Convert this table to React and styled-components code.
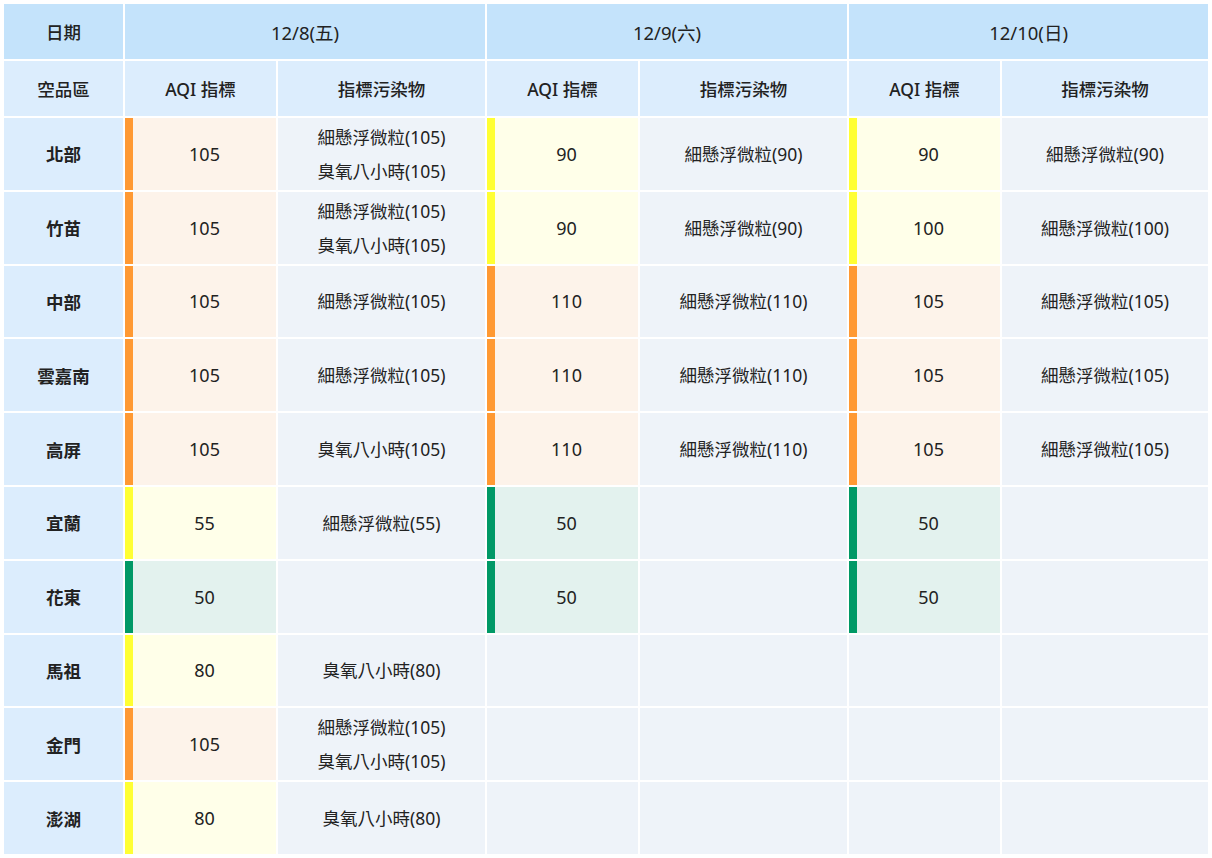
import React from 'react';
import styled, {createGlobalStyle} from "styled-components";

const GlobalStyle = createGlobalStyle`
    body {
        margin: 0;
        background: #ffffff;
        font-family: "Noto Sans", "Noto Sans CJK TC", sans-serif;
        color: #222222;
    }
`;

const dates = ['12/8(五)', '12/9(六)', '12/10(日)'];
const colWidths = [119, 151, 207, 151, 207, 151, 206];

const PM = (v) => `細懸浮微粒(${v})`;
const O3 = (v) => `臭氧八小時(${v})`;

const rows = [
    {area: '北部', days: [{aqi: 105, items: [PM(105), O3(105)]}, {aqi: 90, items: [PM(90)]}, {aqi: 90, items: [PM(90)]}]},
    {area: '竹苗', days: [{aqi: 105, items: [PM(105), O3(105)]}, {aqi: 90, items: [PM(90)]}, {aqi: 100, items: [PM(100)]}]},
    {area: '中部', days: [{aqi: 105, items: [PM(105)]}, {aqi: 110, items: [PM(110)]}, {aqi: 105, items: [PM(105)]}]},
    {area: '雲嘉南', days: [{aqi: 105, items: [PM(105)]}, {aqi: 110, items: [PM(110)]}, {aqi: 105, items: [PM(105)]}]},
    {area: '高屏', days: [{aqi: 105, items: [O3(105)]}, {aqi: 110, items: [PM(110)]}, {aqi: 105, items: [PM(105)]}]},
    {area: '宜蘭', days: [{aqi: 55, items: [PM(55)]}, {aqi: 50, items: []}, {aqi: 50, items: []}]},
    {area: '花東', days: [{aqi: 50, items: []}, {aqi: 50, items: []}, {aqi: 50, items: []}]},
    {area: '馬祖', days: [{aqi: 80, items: [O3(80)]}, null, null]},
    {area: '金門', days: [{aqi: 105, items: [PM(105), O3(105)]}, null, null]},
    {area: '澎湖', days: [{aqi: 80, items: [O3(80)]}, null, null]},
];

const levelOf = (aqi) => {
    if (aqi == null) return 'none';
    if (aqi <= 50) return 'good';
    if (aqi <= 100) return 'fair';
    return 'bad';
};

const levels = {
    none: {bar: 'transparent', bg: '#eef3f9'},
    good: {bar: '#009966', bg: '#e3f2ee'},
    fair: {bar: '#ffff33', bg: '#ffffe9'},
    bad: {bar: '#ff9933', bg: '#fdf3ea'},
};

export default function App() {
    return (
        <>
            <GlobalStyle/>
            <Table>
                <colgroup>
                    {colWidths.map((w, i) => (
                        <Col key={i} $w={w}/>
                    ))}
                </colgroup>
                <thead>
                <tr>
                    <DateHead>日期</DateHead>
                    {dates.map((d) => (
                        <DateHead key={d} colSpan={2} $date>{d}</DateHead>
                    ))}
                </tr>
                <tr>
                    <SubHead>空品區</SubHead>
                    {dates.map((d) => (
                        <React.Fragment key={d}>
                            <SubHead>AQI 指標</SubHead>
                            <SubHead>指標污染物</SubHead>
                        </React.Fragment>
                    ))}
                </tr>
                </thead>
                <tbody>
                {rows.map((r) => (
                    <tr key={r.area}>
                        <AreaCell>{r.area}</AreaCell>
                        {r.days.map((d, i) => {
                            const lv = levelOf(d ? d.aqi : null);
                            return (
                                <React.Fragment key={i}>
                                    <AqiCell $level={lv}>{d ? d.aqi : ''}</AqiCell>
                                    <PollutantCell>
                                        {d && d.items.map((t) => (
                                            <Line key={t}>{t}</Line>
                                        ))}
                                    </PollutantCell>
                                </React.Fragment>
                            );
                        })}
                    </tr>
                ))}
                </tbody>
            </Table>
        </>
    );
}

const Table = styled.table`
    margin: 2px;
    width: 1208px;
    table-layout: fixed;
    border-collapse: separate;
    border-spacing: 2px;
    font-size: 17.5px;
`;

const Col = styled.col`
    width: ${(p) => p.$w}px;
`;

const DateHead = styled.th`
    height: 55px;
    padding: 0;
    background: #c4e3fb;
    font-size: ${(p) => (p.$date ? 18.5 : 17.5)}px;
    font-weight: ${(p) => (p.$date ? 400 : 500)};
    text-align: center;
    vertical-align: middle;
`;

const SubHead = styled.th`
    height: 55px;
    padding: 0;
    background: #dcedfd;
    font-weight: 500;
    text-align: center;
    vertical-align: middle;
`;

const AreaCell = styled.td`
    height: 71.8px;
    padding: 0;
    background: #dcedfd;
    font-weight: 700;
    text-align: center;
    vertical-align: middle;
`;

const AqiCell = styled.td`
    height: 71.8px;
    padding: 0;
    box-sizing: border-box;
    border-left: solid ${(p) => levels[p.$level].bar};
    border-left-width: ${(p) => (p.$level === 'none' ? 0 : 8)}px;
    background: ${(p) => levels[p.$level].bg};
    text-align: center;
    vertical-align: middle;
    font-size: 18px;
`;

const PollutantCell = styled.td`
    height: 71.8px;
    padding: 0;
    background: #eef3f9;
    text-align: center;
    vertical-align: middle;
`;

const Line = styled.div`
    line-height: 34px;
`;
